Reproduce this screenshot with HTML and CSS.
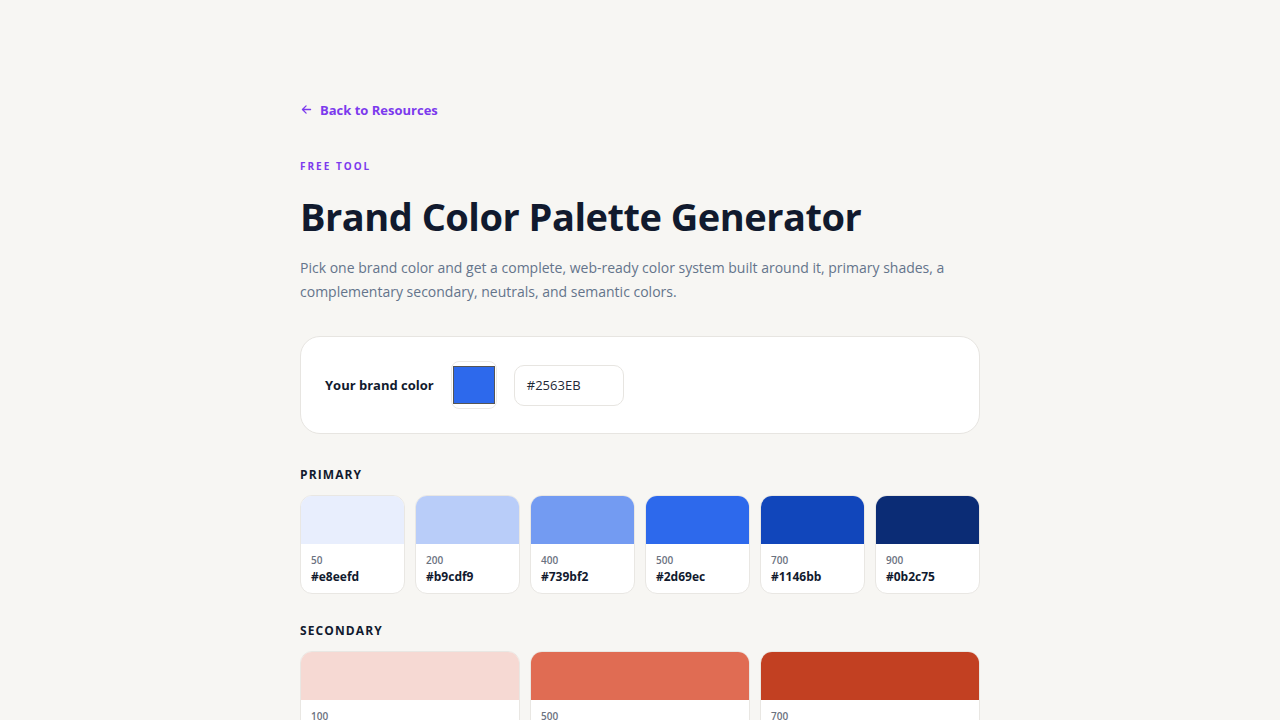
FILE: index.html
```html
<!DOCTYPE html>
<html lang="en">
<head>
<meta charset="utf-8">
<title>Brand Color Palette Generator</title>
<link rel="stylesheet" href="styles.css">
</head>
<body>
<main class="page">
  <a class="back" href="#">
    <svg class="back-icon" viewBox="0 0 16 16" width="13" height="13" fill="none" stroke="currentColor" stroke-width="1.6" stroke-linecap="round" stroke-linejoin="round"><path d="M13 8H3M7.5 3.5 3 8l4.5 4.5"/></svg>
    <span>Back to Resources</span>
  </a>
  <div class="eyebrow">FREE TOOL</div>
  <h1 class="title">Brand Color Palette Generator</h1>
  <p class="lead">Pick one brand color and get a complete, web-ready color system built around it, primary shades, a complementary secondary, neutrals, and semantic colors.</p>

  <section class="picker">
    <span class="picker-label">Your brand color</span>
    <div class="swatch-input"><div class="swatch-fill"></div></div>
    <div class="hex-input">#2563EB</div>
  </section>

  <h2 class="group-title">PRIMARY</h2>
  <div class="grid grid-6">
    <div class="card"><div class="chip" style="background:#e8eefd"></div><div class="meta"><div class="step">50</div><div class="hex">#e8eefd</div></div></div>
    <div class="card"><div class="chip" style="background:#b9cdf9"></div><div class="meta"><div class="step">200</div><div class="hex">#b9cdf9</div></div></div>
    <div class="card"><div class="chip" style="background:#739bf2"></div><div class="meta"><div class="step">400</div><div class="hex">#739bf2</div></div></div>
    <div class="card"><div class="chip" style="background:#2d69ec"></div><div class="meta"><div class="step">500</div><div class="hex">#2d69ec</div></div></div>
    <div class="card"><div class="chip" style="background:#1146bb"></div><div class="meta"><div class="step">700</div><div class="hex">#1146bb</div></div></div>
    <div class="card"><div class="chip" style="background:#0b2c75"></div><div class="meta"><div class="step">900</div><div class="hex">#0b2c75</div></div></div>
  </div>

  <h2 class="group-title group-title-tight">SECONDARY</h2>
  <div class="grid grid-3">
    <div class="card"><div class="chip" style="background:#f6d9d3"></div><div class="meta"><div class="step">100</div><div class="hex">#f6d9d3</div></div></div>
    <div class="card"><div class="chip" style="background:#e06c53"></div><div class="meta"><div class="step">500</div><div class="hex">#e06c53</div></div></div>
    <div class="card"><div class="chip" style="background:#c24022"></div><div class="meta"><div class="step">700</div><div class="hex">#c24022</div></div></div>
  </div>
</main>
</body>
</html>
```

FILE: styles.css
```css
* { box-sizing: border-box; }
html, body { margin: 0; padding: 0; }
body {
  background: #f7f6f3;
  font-family: "Open Sans", "Noto Sans", sans-serif;
  color: #111827;
}
.page {
  width: 680px;
  margin: 0 auto;
  padding-top: 99px;
  padding-bottom: 60px;
}
.back {
  display: inline-flex;
  align-items: center;
  gap: 7px;
  color: #7c3aed;
  font-size: 13px;
  font-weight: 700;
  line-height: 20px;
  text-decoration: none;
}
.back-icon { display: block; }
.eyebrow {
  margin-top: 38px;
  color: #7c3aed;
  font-size: 10px;
  font-weight: 700;
  letter-spacing: 2px;
  line-height: 14px;
}
.title {
  margin: 19px 0 0;
  font-size: 38px;
  line-height: 48px;
  font-weight: 700;
  letter-spacing: -0.5px;
  color: #111a2e;
}
.lead {
  margin: 16px 0 0;
  font-size: 14px;
  line-height: 24px;
  color: #64748b;
}
.picker {
  margin-top: 32px;
  background: #fff;
  border: 1px solid #e7e5e1;
  border-radius: 20px;
  height: 98px;
  padding: 0 24px;
  display: flex;
  align-items: center;
}
.picker-label {
  font-size: 13px;
  font-weight: 700;
  color: #111a2e;
}
.swatch-input {
  margin-left: 17px;
  width: 46px;
  height: 48px;
  border: 1px solid #ebe9e6;
  border-radius: 8px;
  padding: 4px 1px;
  display: flex;
}
.swatch-fill {
  flex: 1;
  background: #2d69ec;
  border: 1px solid #555;
}
.hex-input {
  margin-left: 17px;
  width: 110px;
  height: 41px;
  border: 1px solid #e7e5e1;
  border-radius: 10px;
  padding: 0 12px;
  display: flex;
  align-items: center;
  font-size: 13px;
  color: #1f2937;
}
.group-title {
  margin: 33px 0 0;
  font-size: 12px;
  line-height: 16px;
  font-weight: 700;
  letter-spacing: 1.1px;
  color: #111a2e;
}
.group-title-tight { margin-top: 29px; }
.grid {
  margin-top: 12px;
  display: grid;
  gap: 10px;
}
.grid-6 { grid-template-columns: repeat(6, 1fr); }
.grid-3 { grid-template-columns: repeat(3, 1fr); }
.card {
  background: #fff;
  border: 1px solid #e9e7e3;
  border-radius: 12px;
  overflow: hidden;
}
.chip { height: 48px; }
.meta { padding: 9px 10px 8px; }
.step {
  font-size: 10px;
  line-height: 14px;
  font-weight: 600;
  color: #6b7280;
}
.hex {
  margin-top: 1px;
  font-size: 12px;
  line-height: 17px;
  font-weight: 700;
  color: #111a2e;
}
```
